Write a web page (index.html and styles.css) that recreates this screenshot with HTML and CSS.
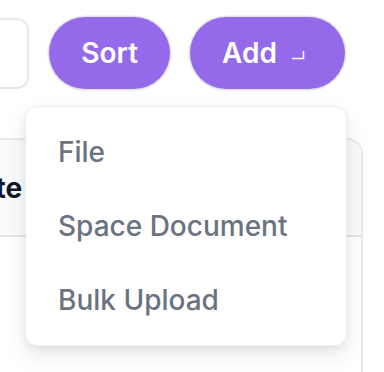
FILE: index.html
```html
<!DOCTYPE html>
<html lang="en">
<head>
  <meta charset="UTF-8" />
  <meta name="viewport" content="width=device-width, initial-scale=1.0" />
  <title>Documents</title>
  <link rel="stylesheet" href="styles.css">
</head>
<body>
  <div class="toolbar">
    <div class="search"></div>
    <button class="btn">Sort</button>
    <div class="add-wrap">
      <button class="btn btn-add">
        Add
        <svg class="corner" width="16" height="16" viewBox="0 0 16 16" fill="none">
          <path d="M2 12.5H13.5V5" stroke="#fff" stroke-width="1.5" />
        </svg>
      </button>
      <div class="menu">
        <div class="menu-item">File</div>
        <div class="menu-item">Space Document</div>
        <div class="menu-item">Bulk Upload</div>
      </div>
    </div>
  </div>

  <div class="card">
    <div class="card-head">
      <span class="th">Date</span>
    </div>
    <div class="card-body"></div>
  </div>
</body>
</html>
```

FILE: styles.css
```css
* {
  margin: 0;
  padding: 0;
  box-sizing: border-box;
  font-family: 'Inter', 'Noto Sans', sans-serif;
}

body {
  background: #fff;
  overflow: hidden;
  height: 372px;
}

.toolbar {
  display: flex;
  justify-content: flex-end;
  align-items: center;
  gap: 20px;
  padding: 17px 39px 0 0;
  width: 384px;
}

.search {
  flex: 0 0 220px;
  height: 71px;
  border: 2px solid #e8e8ec;
  border-radius: 12px;
}

.btn {
  display: flex;
  align-items: center;
  height: 72px;
  padding: 0 32px;
  background: #946aeb;
  color: #fff;
  border: none;
  border-radius: 36px;
  box-shadow: 0 0 0 1.5px #e6e3ee, 0 1px 3px rgba(0, 0, 0, 0.08);
  font-size: 28px;
  font-weight: 600;
  cursor: pointer;
}

.add-wrap {
  position: relative;
}

.btn-add {
  gap: 13px;
  padding-right: 39px;
}

.corner {
  margin-top: 2px;
}

.menu {
  position: absolute;
  top: 89px;
  right: -2px;
  width: 322px;
  padding: 8px 0;
  background: #fff;
  border: 1px solid #eceef1;
  border-radius: 12px;
  box-shadow: 0 10px 24px rgba(0, 0, 0, 0.08), 0 4px 8px rgba(0, 0, 0, 0.06);
  z-index: 2;
}

.menu-item {
  display: flex;
  align-items: center;
  height: 74px;
  padding: 0 32px;
  color: #6b7280;
  font-size: 28px;
  font-weight: 500;
}

.card {
  margin: 49px 21px 0 -200px;
  border: 2px solid #e9eaee;
  border-bottom: none;
  border-radius: 16px 16px 0 0;
  height: 240px;
}

.card-head {
  display: flex;
  align-items: center;
  height: 97px;
  background: #f9fafb;
  border-bottom: 2px solid #e2e4e8;
  border-radius: 14px 14px 0 0;
}

.th {
  padding-left: 157px;
  color: #111827;
  font-size: 28px;
  font-weight: 700;
}
```
